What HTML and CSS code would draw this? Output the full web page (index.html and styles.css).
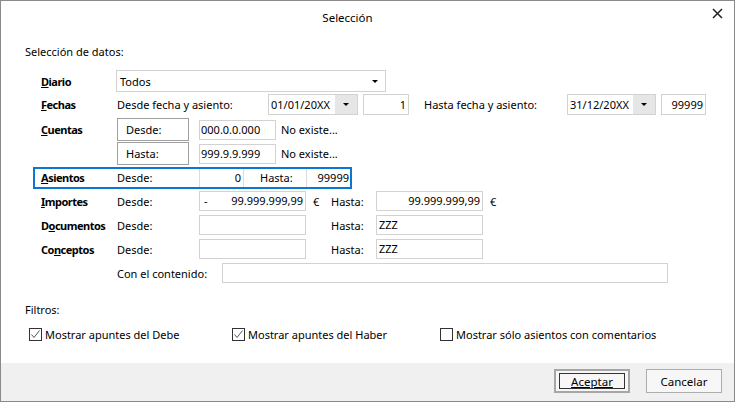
FILE: index.html
```html
<!DOCTYPE html>
<html lang="es">
<head>
<meta charset="UTF-8">
<title>Selección</title>
<link rel="stylesheet" href="styles.css">
</head>
<body>
<div class="dialog">
	<div class="titlebar">
		<span class="title">Selección</span>
		<span class="close">
			<svg width="11" height="11" viewBox="0 0 11 11"><path d="M1 1 L10 10 M10 1 L1 10" stroke="#222" stroke-width="1.5" fill="none"/></svg>
		</span>
	</div>

	<div class="content">
		<div class="section-title">Selección de datos:</div>

		<div class="form">
			<div class="row row-diario">
				<span class="key"><u>D</u>iario</span>
				<div class="select">
					<span>Todos</span>
					<span class="caret"></span>
				</div>
			</div>

			<div class="row row-fechas">
				<span class="key"><u>F</u>echas</span>
				<span class="fecha-label">Desde fecha y asiento:</span>
				<div class="date"><span class="date-text">01/01/20XX</span><span class="date-btn"><span class="caret"></span></span></div>
				<div class="input num asiento-num">1</div>
				<span class="fecha-label hasta">Hasta fecha y asiento:</span>
				<div class="date date-2"><span class="date-text">31/12/20XX</span><span class="date-btn"><span class="caret"></span></span></div>
				<div class="input num asiento-num asiento-num-2">99999</div>
			</div>

			<div class="row row-cuentas">
				<span class="key"><u>C</u>uentas</span>
				<div class="cuentas-list">
					<div class="cuenta">
						<span class="boxed">Desde:</span>
						<div class="input cuenta-input">000.0.0.000</div>
						<span class="no-existe">No existe...</span>
					</div>
					<div class="cuenta">
						<span class="boxed">Hasta:</span>
						<div class="input cuenta-input">999.9.9.999</div>
						<span class="no-existe">No existe...</span>
					</div>
				</div>
			</div>

			<div class="row row-asientos">
				<span class="key"><u>A</u>sientos</span>
				<span class="desde">Desde:</span>
				<span class="cell cell-desde">0</span>
				<span class="cell-label">Hasta:</span>
				<span class="cell cell-hasta">99999</span>
			</div>

			<div class="row row-range">
				<span class="key"><u>I</u>mportes</span>
				<span class="desde">Desde:</span>
				<div class="input range-input importe"><span>-</span><span>99.999.999,99</span></div>
				<span class="euro">€</span>
				<span class="hasta-label">Hasta:</span>
				<div class="input range-input num">99.999.999,99</div>
				<span class="euro">€</span>
			</div>

			<div class="row row-range">
				<span class="key">D<u>o</u>cumentos</span>
				<span class="desde">Desde:</span>
				<div class="input range-input"></div>
				<span class="euro"></span>
				<span class="hasta-label">Hasta:</span>
				<div class="input range-input">ZZZ</div>
			</div>

			<div class="row row-range">
				<span class="key">Co<u>n</u>ceptos</span>
				<span class="desde">Desde:</span>
				<div class="input range-input"></div>
				<span class="euro"></span>
				<span class="hasta-label">Hasta:</span>
				<div class="input range-input">ZZZ</div>
			</div>

			<div class="row row-range">
				<span class="key"></span>
				<span class="contenido-label">Con el contenido:</span>
				<div class="input contenido-input"></div>
			</div>
		</div>

		<div class="section-title filtros">Filtros:</div>

		<div class="checks">
			<label class="check check-1"><span class="box"><svg width="11" height="11" viewBox="0 0 11 11"><path d="M1.5 5.5 L4 8.5 L9.5 1.5" stroke="#555" stroke-width="1" fill="none"/></svg></span>Mostrar apuntes del Debe</label>
			<label class="check check-2"><span class="box"><svg width="11" height="11" viewBox="0 0 11 11"><path d="M1.5 5.5 L4 8.5 L9.5 1.5" stroke="#555" stroke-width="1" fill="none"/></svg></span>Mostrar apuntes del Haber</label>
			<label class="check"><span class="box"></span>Mostrar sólo asientos con comentarios</label>
		</div>
	</div>

	<div class="footer">
		<button class="btn btn-default"><span class="focus">Aceptar</span></button>
		<button class="btn">Cancelar</button>
	</div>
</div>
</body>
</html>
```

FILE: styles.css
```css
body {
	margin: 0;
	font-family: "Noto Sans", "Liberation Sans", sans-serif;
	font-size: 11px;
	color: #000;
	background: #fff;
}

.dialog {
	width: 735px;
	height: 402px;
	box-sizing: border-box;
	border: 1px solid #8a8a8a;
	background: #fff;
	display: flex;
	flex-direction: column;
}

.titlebar {
	height: 32px;
	display: flex;
	align-items: center;
	position: relative;
}

.title {
	flex: 1;
	text-align: center;
	padding-right: 40px;
	font-size: 11.5px;
}

.close {
	position: absolute;
	right: 11px;
	top: 7px;
	width: 11px;
	height: 11px;
	display: flex;
}

.content {
	padding: 11px 0 0 24px;
	flex: 1;
}

.section-title {
	line-height: 16px;
	height: 16px;
}

.form {
	margin: 10px 0 0 8px;
}

.row {
	display: flex;
	align-items: center;
	padding-left: 8px;
}

.key {
	width: 76px;
	flex: none;
	font-weight: 700;
	letter-spacing: -0.5px;
}

.input {
	box-sizing: border-box;
	border: 1px solid #d2d2d2;
	height: 20px;
	line-height: 18px;
	padding: 0 2px;
	background: #fff;
	white-space: nowrap;
	overflow: hidden;
}

.num {
	text-align: right;
}

.caret {
	display: inline-block;
	width: 0;
	height: 0;
	border-left: 3px solid transparent;
	border-right: 3px solid transparent;
	border-top: 3px solid #000;
}

/* diario */
.row-diario {
	height: 22px;
}

.select {
	box-sizing: border-box;
	width: 270px;
	height: 22px;
	margin-left: -1px;
	border: 1px solid #d2d2d2;
	display: flex;
	align-items: center;
	justify-content: space-between;
	padding: 0 7px 0 3px;
}

/* fechas */
.row-fechas {
	height: 24px;
}

.fecha-label {
	width: 151px;
}

.fecha-label.hasta {
	width: 143px;
	margin-left: 15px;
}

.date {
	box-sizing: border-box;
	width: 90px;
	height: 21px;
	border: 1px solid #d2d2d2;
	display: flex;
}

.date-2 {
	width: 89px;
}

.date-text {
	flex: 1;
	line-height: 19px;
	padding-left: 2px;
	white-space: nowrap;
	overflow: hidden;
}

.date-btn {
	width: 22px;
	flex: none;
	background: #e6e6e6;
	display: flex;
	align-items: center;
	justify-content: center;
}

.asiento-num {
	width: 46px;
	height: 21px;
	margin-left: 5px;
	line-height: 19px;
}

.asiento-num-2 {
	width: 45px;
}

/* cuentas */
.row-cuentas {
	align-items: flex-start;
	padding-top: 2px;
}

.row-cuentas .key {
	line-height: 23px;
}

.cuentas-list {
	display: flex;
	flex-direction: column;
	gap: 1px;
}

.cuenta {
	display: flex;
	align-items: center;
	height: 23px;
}

.boxed {
	box-sizing: border-box;
	width: 72px;
	height: 23px;
	border: 1px solid #a0a0a0;
	line-height: 21px;
	padding-left: 8px;
}

.cuenta-input {
	width: 77px;
	margin-left: 10px;
	padding-left: 1px;
}

.no-existe {
	margin-left: 5px;
}

/* asientos */
.row-asientos {
	width: fit-content;
	height: 18px;
	margin-top: 2px;
	border: 2px solid #0a78d2;
	padding-left: 6px;
	align-items: stretch;
}

.row-asientos > span {
	line-height: 18px;
}

.desde {
	width: 82px;
	flex: none;
}

.cell {
	border-left: 1px solid #dcdcdc;
	text-align: right;
	padding-right: 2px;
	box-sizing: border-box;
}

.cell-desde {
	width: 45px;
	border-right: 1px solid #dcdcdc;
}

.cell-label {
	width: 62px;
	padding-left: 16px;
	box-sizing: border-box;
}

.cell-hasta {
	width: 44px;
	padding-right: 1px;
}

/* importes, documentos, conceptos */
.row-range {
	height: 24px;
}

.range-input {
	width: 107px;
}

.importe {
	display: flex;
	justify-content: space-between;
	padding-left: 4px;
}

.euro {
	width: 25px;
	padding-left: 7px;
	box-sizing: border-box;
}

.hasta-label {
	width: 45px;
}

.contenido-label {
	width: 105px;
}

.contenido-input {
	width: 446px;
}

/* filtros */
.filtros {
	margin-top: 17px;
}

.checks {
	display: flex;
	margin-top: 8px;
	padding-left: 4px;
	height: 16px;
	align-items: center;
}

.check {
	display: flex;
	align-items: center;
	gap: 3px;
}

.check-1 {
	width: 203px;
}

.check-2 {
	width: 208px;
}

.box {
	box-sizing: border-box;
	width: 13px;
	height: 13px;
	border: 1px solid #333;
	display: flex;
	align-items: center;
	justify-content: center;
}

/* footer */
.footer {
	height: 38px;
	background: #f0f0f0;
	display: flex;
	justify-content: flex-end;
	align-items: flex-start;
	gap: 16px;
	padding: 6px 12px 0 0;
	box-sizing: border-box;
}

.btn {
	box-sizing: border-box;
	width: 76px;
	height: 24px;
	margin: 0;
	border: 1px solid #adadad;
	background: #f7f7f7;
	font-family: inherit;
	font-size: 11.5px;
	color: #000;
	padding: 0;
	display: flex;
	align-items: center;
	justify-content: center;
}

.btn-default {
	border: 2px solid #a6a6a6;
	padding: 1px;
}

.focus {
	flex: 1;
	align-self: stretch;
	border: 1px solid #333;
	display: flex;
	align-items: center;
	justify-content: center;
	text-decoration: underline;
	margin: 1px 2px;
}
```
